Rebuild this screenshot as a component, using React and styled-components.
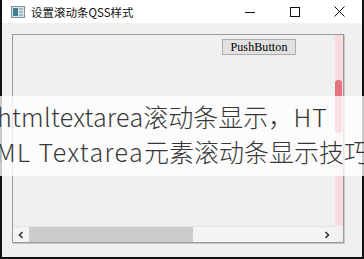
import React from "react";
import styled, { createGlobalStyle } from "styled-components";

const Global = createGlobalStyle`
  html, body { margin: 0; padding: 0; background: #000; }
  body { width: 364px; height: 259px; overflow: hidden; }
`;

const Stage = styled.div`
  position: relative;
  width: 364px;
  height: 259px;
  overflow: hidden;
`;

const Window = styled.div`
  box-sizing: border-box;
  width: 364px;
  height: 259px;
  display: flex;
  flex-direction: column;
  border-left: 2px solid #111;
  border-right: 2px solid #111;
  border-bottom: 2px solid #111;
  background: #f0f0f0;
`;

const TitleBar = styled.div`
  height: 23px;
  flex: none;
  display: flex;
  align-items: center;
  background: #ffffff;
`;

const AppIcon = styled.svg`
  margin-left: 9px;
  width: 14px;
  height: 12px;
  flex: none;
`;

const Title = styled.div`
  margin-left: 6px;
  font-family: "Noto Sans CJK SC", "Noto Sans", sans-serif;
  font-size: 11.5px;
  color: #111;
  flex: 1;
  white-space: nowrap;
`;

const Controls = styled.div`
  display: flex;
  height: 100%;
`;

const CtrlBtn = styled.div`
  width: 45px;
  height: 100%;
  display: flex;
  align-items: center;
  justify-content: center;
`;

const Client = styled.div`
  flex: 1;
  display: flex;
  padding: 11px 18px 14px 10px;
`;

const Frame = styled.div`
  flex: 1;
  display: grid;
  grid-template-columns: 1fr 8px;
  grid-template-rows: 1fr 16px;
  border: 1px solid #9a9a9a;
  box-shadow: 1px 1px 0 #c8c8c8;
  background: #f0f0f0;
`;

const Viewport = styled.div`
  padding: 4px 0 0 209px;
  display: flex;
  align-items: flex-start;
`;

const PushButton = styled.div`
  box-sizing: border-box;
  width: 74px;
  height: 16px;
  background: #e1e1e1;
  border: 1px solid #adadad;
  font-family: "Liberation Serif", serif;
  font-size: 12px;
  line-height: 14px;
  text-align: center;
  color: #000;
  letter-spacing: 0.1px;
`;

const VScroll = styled.div`
  background: #f6dcdc;
  display: flex;
  flex-direction: column;
  padding-top: 45px;
`;

const VHandle = styled.div`
  height: 53px;
  width: 7px;
  border-radius: 3px;
  background: #e6737e;
`;

const HScroll = styled.div`
  display: flex;
  align-items: center;
  background: #f4f4f4;
  border-top: 1px solid #e4e4e4;
  box-sizing: border-box;
`;

const Arrow = styled.div`
  width: 16px;
  flex: none;
  display: flex;
  justify-content: center;
  align-items: center;
`;

const HTrack = styled.div`
  flex: 1;
  height: 100%;
  display: flex;
  align-items: stretch;
`;

const HHandle = styled.div`
  width: 164px;
  background: #cdcdcd;
`;

const Corner = styled.div`
  background: #f0f0f0;
`;

const Caption = styled.div`
  position: absolute;
  left: 0;
  top: 96px;
  width: 364px;
  height: 80px;
  background: rgba(255, 255, 255, 0.78);
  overflow: hidden;
  font-family: "Noto Sans CJK SC", "Noto Sans", sans-serif;
  font-weight: 300;
  font-size: 25px;
  color: #383838;
`;

const CaptionLine = styled.div`
  white-space: nowrap;
  height: 35px;
  line-height: 35px;
  margin-left: ${(p) => p.$shift}px;
  &:first-child { margin-top: 3px; }
`;

const Latin = styled.span`
  letter-spacing: ${(p) => p.$track}px;
`;

const Chevron = ({ dir }) => (
  <svg width="6" height="8" viewBox="0 0 6 8">
    <path
      d={dir === "left" ? "M4.5 1 L1.5 4 L4.5 7" : "M1.5 1 L4.5 4 L1.5 7"}
      fill="none"
      stroke="#333"
      strokeWidth="1.6"
    />
  </svg>
);

export default function App() {
  return (
    <Stage>
      <Global />
      <Window>
        <TitleBar>
          <AppIcon viewBox="0 0 14 12">
            <rect x="0.5" y="0.5" width="13" height="11" fill="#dfe6ea" stroke="#7c8f9a" />
            <rect x="2" y="2" width="5" height="8" fill="#3f7f95" />
            <rect x="8" y="2" width="4" height="2" fill="#9fb7c3" />
            <rect x="8" y="5" width="4" height="2" fill="#9fb7c3" />
            <rect x="8" y="8" width="4" height="2" fill="#9fb7c3" />
          </AppIcon>
          <Title>设置滚动条QSS样式</Title>
          <Controls>
            <CtrlBtn>
              <svg width="10" height="10" viewBox="0 0 10 10">
                <path d="M0 5.5 H10" stroke="#111" strokeWidth="1" />
              </svg>
            </CtrlBtn>
            <CtrlBtn>
              <svg width="10" height="10" viewBox="0 0 10 10">
                <rect x="0.5" y="0.5" width="9" height="9" fill="none" stroke="#111" strokeWidth="1" />
              </svg>
            </CtrlBtn>
            <CtrlBtn>
              <svg width="11" height="11" viewBox="0 0 11 11">
                <path d="M0.5 0.5 L10.5 10.5 M10.5 0.5 L0.5 10.5" stroke="#111" strokeWidth="1" />
              </svg>
            </CtrlBtn>
          </Controls>
        </TitleBar>
        <Client>
          <Frame>
            <Viewport>
              <PushButton>PushButton</PushButton>
            </Viewport>
            <VScroll>
              <VHandle />
            </VScroll>
            <HScroll>
              <Arrow>
                <Chevron dir="left" />
              </Arrow>
              <HTrack>
                <HHandle />
              </HTrack>
              <Arrow>
                <Chevron dir="right" />
              </Arrow>
            </HScroll>
            <Corner />
          </Frame>
        </Client>
      </Window>
      <Caption>
        <CaptionLine $shift={-3}>
          <Latin $track={0.3}>htmltextarea</Latin>滚动条显示，<Latin $track={1}>HT</Latin>
        </CaptionLine>
        <CaptionLine $shift={-4}>
          <Latin $track={1.4}>ML Textarea</Latin>元素滚动条显示技巧
        </CaptionLine>
      </Caption>
    </Stage>
  );
}
